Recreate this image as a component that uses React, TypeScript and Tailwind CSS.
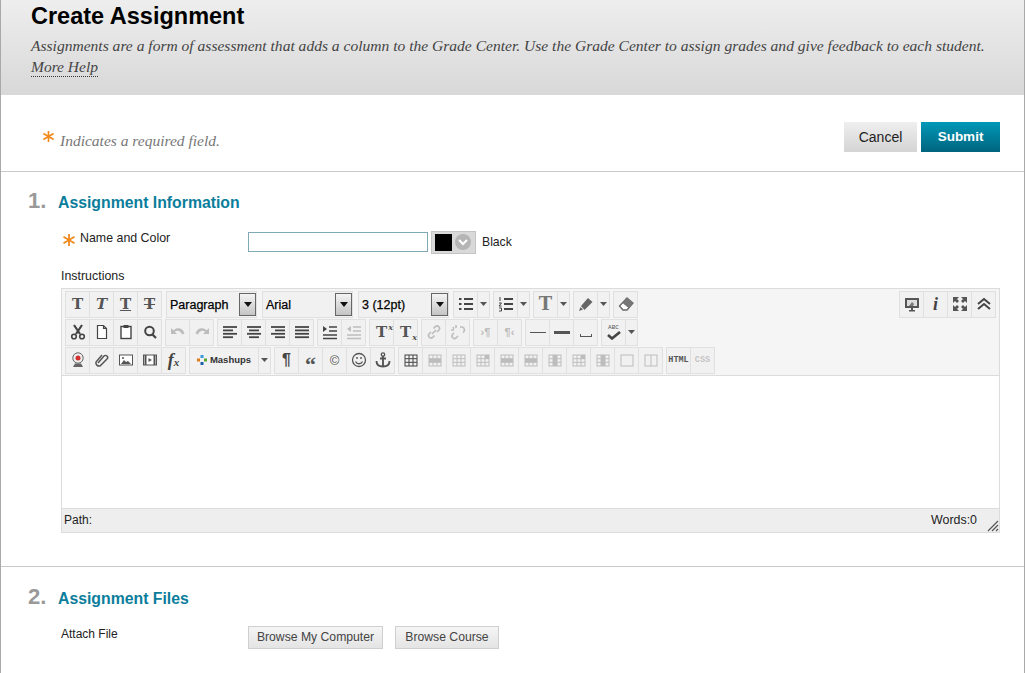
import React from 'react';

const ON = '#444';
const OFF = '#bdbdbd';

const Svg = ({ children, w = 16, h = 16 }: { children: React.ReactNode; w?: number; h?: number }) => (
  <svg width={w} height={h} viewBox={`0 0 ${w} ${h}`} fill="none">
    {children}
  </svg>
);

const Cell = ({ children, w = 'w-6' }: { children?: React.ReactNode; w?: string }) => (
  <div className={`${w} h-[25px] flex items-center justify-center shrink-0 border-r border-[#e0e0e0]`}>{children}</div>
);

const Group = ({ children }: { children: React.ReactNode }) => (
  <div className="flex border-y border-l border-[#e0e0e0] bg-[#f1f1f1] shrink-0 box-content h-[25px] -my-px">{children}</div>
);

const Caret = () => (
  <Cell w="w-3">
    <svg width="7" height="4" viewBox="0 0 7 4">
      <path d="M0 0h7L3.5 4z" fill="#555" />
    </svg>
  </Cell>
);

const Glyph = ({
  t,
  color = '#555',
  italic,
  under,
  strike,
  sup,
  sub,
}: {
  t: string;
  color?: string;
  italic?: boolean;
  under?: boolean;
  strike?: boolean;
  sup?: string;
  sub?: string;
}) => (
  <span
    className={`relative font-['DejaVu_Serif',serif] font-bold text-[15px] leading-none ${italic ? 'italic' : ''} ${under ? 'underline' : ''} ${strike ? 'line-through' : ''}`}
    style={{ color }}
  >
    {t}
    {sup && <span className="absolute -right-[6px] -top-[2px] text-[8px] italic">{sup}</span>}
    {sub && <span className="absolute -right-[6px] -bottom-[1px] text-[8px] italic">{sub}</span>}
  </span>
);

const Lines = ({ kind, color = ON }: { kind: 'l' | 'c' | 'r' | 'j'; color?: string }) => {
  const rows = [0, 1, 2, 3];
  const pos = (i: number) => {
    const short = i % 2 === 1;
    if (kind === 'j' || !short) return [1, 15];
    if (kind === 'l') return [1, 11];
    if (kind === 'c') return [3, 13];
    return [5, 15];
  };
  return (
    <Svg>
      {rows.map((i) => (
        <path key={i} d={`M${pos(i)[0]} ${3 + i * 3.4}H${pos(i)[1]}`} stroke={color} strokeWidth="1.8" />
      ))}
    </Svg>
  );
};

const Indent = ({ color, out }: { color: string; out?: boolean }) => (
  <Svg>
    <path d={out ? 'M5 2L1 5l4 3z' : 'M1 2l4 3-4 3z'} fill={color} />
    <path d="M7 3h8M7 7h8M1 11h14M1 14.5h14" stroke={color} strokeWidth="1.6" />
  </Svg>
);

const Table = ({ color = OFF, mark }: { color?: string; mark?: 'row' | 'col' | 'cell' | 'none' }) => (
  <Svg w={14} h={14}>
    <rect x="1" y="2" width="12" height="11" stroke={color} />
    <path d="M5 2v11M9 2v11M1 5.7h12M1 9.3h12" stroke={color} />
    {mark === 'row' && <rect x="1" y="5.7" width="12" height="3.6" fill={color} />}
    {mark === 'col' && <rect x="5" y="2" width="4" height="11" fill={color} />}
    {mark === 'cell' && <rect x="9" y="2" width="4" height="3.7" fill={color} />}
  </Svg>
);

const Select = ({ label, w }: { label: string; w: string }) => (
  <div className={`${w} h-[25px] -my-px flex items-center justify-between border border-[#e0e0e0] bg-[#f1f1f1] shrink-0 box-content`}>
    <span className="pl-[3px] pt-[3px] text-[12.5px] text-black [-webkit-text-stroke:0.25px_#000]">{label}</span>
    <div className="w-[17px] h-[23px] border border-[#666] bg-gradient-to-b from-[#f4f4f4] to-[#c4c4c4] flex items-center justify-center">
      <svg width="8" height="5" viewBox="0 0 8 5">
        <path d="M0 0h8L4 5z" fill="#111" />
      </svg>
    </div>
  </div>
);

const Star = ({ size = 14 }: { size?: number }) => (
  <svg width={size} height={size} viewBox="0 0 14 14" className="shrink-0">
    <path d="M7 1v12M1.5 3.8l11 6.4M12.5 3.8l-11 6.4" stroke="#f08a1d" strokeWidth="1.8" />
  </svg>
);

const Row = ({ children }: { children: React.ReactNode }) => <div className="flex gap-[3px] h-[25px] items-center">{children}</div>;

const Toolbar = () => (
  <div className="bg-[#f5f5f5] border-b border-[#dcdcdc] h-[87px] pl-[3px] pr-[3px] pt-[3px] flex flex-col gap-[3px]">
    <div className="flex justify-between">
      <Row>
        <Group>
          <Cell><Glyph t="T" /></Cell>
          <Cell><Glyph t="T" italic /></Cell>
          <Cell><Glyph t="T" under /></Cell>
          <Cell><Glyph t="T" strike /></Cell>
        </Group>
        <Select label="Paragraph" w="w-[89px] ml-px" />
        <Select label="Arial" w="w-[89px] ml-[2px]" />
        <Select label="3 (12pt)" w="w-[89px] ml-[2px] mr-px" />
        <Group>
          <Cell>
            <Svg><path d="M1 3h2.500M1 8h2.500M1 13h2.500M6 3h9M6 8h9M6 13h9" stroke={ON} strokeWidth="1.800" /></Svg>
          </Cell>
          <Caret />
        </Group>
        <Group>
          <Cell>
            <Svg><path d="M6 3h9M6 8h9M6 13h9" stroke={ON} strokeWidth="1.800" /><path d="M2 1v4M1 7h2.500L1 10h2.500M1 12h2.500v3H1" stroke={ON} /></Svg>
          </Cell>
          <Caret />
        </Group>
        <Group>
          <Cell><span className="font-['DejaVu_Serif',serif] font-bold text-[18px] leading-none text-[#777]">T</span></Cell>
          <Caret />
        </Group>
        <Group>
          <Cell>
            <Svg><path d="M1 15l1.500-4 2.500 2.500z" fill="#666" /><path d="M3 10l7-8 4.500 4-8 8z" fill="#666" /></Svg>
          </Cell>
          <Caret />
        </Group>
        <Group>
          <Cell>
            <Svg><path d="M9 2l6 5-6 7H5L1.500 10z" stroke="#666" strokeWidth="1.300" fill="#fff" /><path d="M9 2l6 5-4.500 5L4.500 7z" fill="#777" /></Svg>
          </Cell>
        </Group>
      </Row>
      <Row>
        <Group>
          <Cell>
            <Svg><rect x="1" y="2" width="14" height="10" fill="#555" /><path d="M3 4h10v6H3z" fill="#ddd" /><path d="M5 10l3-4 2 2-1 2z" fill="#777" /><path d="M5 14h6v1.500H5zM7 12h2v2H7z" fill="#555" /></Svg>
          </Cell>
          <Cell><span className="font-['Liberation_Serif',serif] italic font-bold text-[18px] leading-none text-[#444]">i</span></Cell>
          <Cell>
            <Svg><path d="M1 1h6L5 3l2 2-2 2-2-2-2 2zM15 1H9l2 2-2 2 2 2 2-2 2 2zM1 15h6l-2-2 2-2-2-2-2 2-2-2zM15 15H9l2-2-2-2 2-2 2 2 2-2z" fill="#555" /></Svg>
          </Cell>
          <Cell>
            <Svg><path d="M2 8l6-5 6 5M2 13l6-5 6 5" stroke="#444" strokeWidth="2" /></Svg>
          </Cell>
        </Group>
      </Row>
    </div>
    <Row>
      <Group>
        <Cell>
          <Svg><path d="M4 1l6 9M12 1l-6 9" stroke="#444" strokeWidth="2.200" /><circle cx="4" cy="12.500" r="2.300" stroke="#444" strokeWidth="1.600" /><circle cx="12" cy="12.500" r="2.300" stroke="#444" strokeWidth="1.600" /></Svg>
        </Cell>
        <Cell>
          <Svg><path d="M3.500 1.500h6l3 3v10h-9zM9.500 1.500v3h3" stroke="#444" strokeWidth="1.200" fill="#fff" /></Svg>
        </Cell>
        <Cell>
          <Svg><rect x="3" y="2.500" width="10" height="12" stroke="#444" strokeWidth="1.400" fill="#fff" /><rect x="5.500" y="1" width="5" height="3" fill="#444" /></Svg>
        </Cell>
        <Cell>
          <Svg><circle cx="7.500" cy="7" r="4.300" stroke="#444" strokeWidth="2" /><path d="M10.500 10.500l3.500 3.500" stroke="#444" strokeWidth="2.200" /></Svg>
        </Cell>
      </Group>
      <Group>
        <Cell><Svg><path d="M1 4v6h6L4.800 7.800C7 6 10.500 6.500 12 10.500l2.500-1C13 4 7.500 2.500 3.300 6.200z" fill={OFF} /></Svg></Cell>
        <Cell><Svg><path d="M15 4v6H9l2.200-2.200C9 6 5.500 6.500 4 10.500l-2.500-1C3 4 8.500 2.500 12.700 6.200z" fill={OFF} /></Svg></Cell>
      </Group>
      <Group>
        <Cell><Lines kind="l" /></Cell>
        <Cell><Lines kind="c" /></Cell>
        <Cell><Lines kind="r" /></Cell>
        <Cell><Lines kind="j" /></Cell>
      </Group>
      <Group>
        <Cell><Indent color={ON} /></Cell>
        <Cell><Indent color={OFF} out /></Cell>
      </Group>
      <Group>
        <Cell><Glyph t="T" sup="x" /></Cell>
        <Cell><Glyph t="T" sub="x" /></Cell>
      </Group>
      <Group>
        <Cell><Svg><path d="M6 10l4-4M5 8l-2 2a2.500 2.500 0 0 0 3.500 3.500l2-2M11 8l2-2A2.500 2.500 0 0 0 9.500 2.500l-2 2" stroke={OFF} strokeWidth="1.700" /></Svg></Cell>
        <Cell><Svg><path d="M4 9l-1.500 1.500a2.500 2.500 0 0 0 3.500 3.500L8 12M10 3h2a3 3 0 0 1 1 5.500M3 3l1 2M6 1v3M1 6h3" stroke={OFF} strokeWidth="1.600" /></Svg></Cell>
      </Group>
      <Group>
        <Cell><span className="text-[11px] font-bold text-[#bbb] font-['Liberation_Sans',sans-serif]">›¶</span></Cell>
        <Cell><span className="text-[11px] font-bold text-[#bbb] font-['Liberation_Sans',sans-serif]">¶‹</span></Cell>
      </Group>
      <Group>
        <Cell><div className="w-[16px] h-px bg-[#555]" /></Cell>
        <Cell><div className="w-[16px] h-[3px] bg-[#555]" /></Cell>
        <Cell><div className="w-[12px] h-[3px] mt-[7px] border-x border-b border-[#555]" /></Cell>
      </Group>
      <Group>
        <Cell>
          <div className="flex flex-col items-center leading-none">
            <span className="text-[6px] text-[#555] font-['Liberation_Mono',monospace] leading-[6px]">ABC</span>
            <svg width="14" height="9" viewBox="0 0 14 9"><path d="M1 4l4 3.500L13 1" stroke="#444" strokeWidth="2.600" fill="none" /></svg>
          </div>
        </Cell>
        <Caret />
      </Group>
    </Row>
    <Row>
      <Group>
        <Cell>
          <Svg><circle cx="8" cy="6" r="5.200" stroke="#666" fill="#eee" /><circle cx="8" cy="6" r="2.500" fill="#d43030" /><path d="M3 15h10l-2-3.500H5z" fill="#666" /></Svg>
        </Cell>
        <Cell>
          <Svg><path d="M4 11l6-7a2 2 0 0 1 3 3l-7 7a3.300 3.300 0 0 1-4-4l6-7" stroke="#555" strokeWidth="1.500" /></Svg>
        </Cell>
        <Cell>
          <Svg><rect x="1.500" y="3" width="13" height="10" stroke="#555" fill="#fff" /><path d="M3 12l3-4 2 2 2-1 3 3z" fill="#555" /><circle cx="5" cy="6" r="1" fill="#555" /></Svg>
        </Cell>
        <Cell>
          <Svg><rect x="1.500" y="3" width="13" height="10" stroke="#555" fill="#fff" /><path d="M3.500 3v10M12.500 3v10" stroke="#555" strokeWidth="2" /><path d="M6.500 6l3.500 2-3.500 2z" fill="#555" /></Svg>
        </Cell>
        <Cell>
          <span className="font-['Liberation_Serif',serif] italic font-bold text-[18px] leading-none text-[#444]">f<span className="text-[11px]">x</span></span>
        </Cell>
      </Group>
      <Group>
        <Cell w="w-[69px]">
          <span className="flex items-center gap-[3px] text-[9.5px] font-bold text-[#333] font-['Liberation_Sans',sans-serif]">
            <svg width="10" height="10" viewBox="0 0 10 10">
              <rect x="0" y="3.500" width="3" height="3" fill="#e07a1a" />
              <rect x="3.500" y="0" width="3" height="3" fill="#3b9ad9" />
              <rect x="7" y="3.500" width="3" height="3" fill="#5aa632" />
              <rect x="3.500" y="7" width="3" height="3" fill="#1b5fa8" />
            </svg>
            Mashups
          </span>
        </Cell>
        <Caret />
      </Group>
      <Group>
        <Cell><span className="font-bold text-[16px] leading-none text-[#444]">¶</span></Cell>
        <Cell><span className="font-['Liberation_Serif',serif] font-bold text-[22px] leading-none text-[#555] pt-[9px]">“</span></Cell>
        <Cell><span className="text-[13px] leading-none text-[#555]">©</span></Cell>
        <Cell>
          <Svg><circle cx="8" cy="8" r="6.500" stroke="#555" strokeWidth="1.300" /><path d="M4.500 9.500c1.500 3 5.500 3 7 0" stroke="#555" strokeWidth="1.300" /><path d="M6 5v2M10 5v2" stroke="#555" strokeWidth="1.400" /></Svg>
        </Cell>
        <Cell>
          <Svg><circle cx="8" cy="2.500" r="1.700" stroke="#555" strokeWidth="1.300" /><path d="M8 4v11M5 6.500h6M1.500 9c0 4 3 5.500 6.500 5.500s6.500-1.500 6.500-5.500" stroke="#555" strokeWidth="1.900" /></Svg>
        </Cell>
      </Group>
      <Group>
        <Cell><Table color="#444" /></Cell>
        <Cell><Table mark="row" /></Cell>
        <Cell><Table /></Cell>
        <Cell><Table mark="cell" /></Cell>
        <Cell><Table mark="row" /></Cell>
        <Cell><Table mark="row" /></Cell>
        <Cell><Table mark="col" /></Cell>
        <Cell><Table mark="cell" /></Cell>
        <Cell><Table mark="col" /></Cell>
        <Cell>
          <Svg w={14} h={14}><rect x="1" y="2" width="12" height="11" stroke={OFF} /></Svg>
        </Cell>
        <Cell>
          <Svg w={14} h={14}><rect x="1" y="2" width="12" height="11" stroke={OFF} /><path d="M7 2v11" stroke={OFF} /></Svg>
        </Cell>
      </Group>
      <Group>
        <Cell><span className="font-['Liberation_Mono',monospace] font-bold text-[8.500px] text-[#555]">HTML</span></Cell>
        <Cell><span className="font-['Liberation_Mono',monospace] font-bold text-[8.500px] text-[#c4c4c4]">CSS</span></Cell>
      </Group>
    </Row>
  </div>
);

const App = () => (
  <div className="w-[1026px] h-[673px] overflow-hidden bg-white font-['Liberation_Sans',Arial,sans-serif] pr-px">
    <div className="h-full border-x border-[#a9a9a9]">
      <div className="h-[95px] bg-gradient-to-b from-[#eeeeee] to-[#d8d8d8] pl-[30px] pt-[2px]">
        <h1 className="text-[23.5px] leading-[28px] font-bold text-black">Create Assignment</h1>
        <p className="mt-[6px] font-['Liberation_Serif',serif] italic text-[15.55px] leading-[19px] text-[#444]">
          Assignments are a form of assessment that adds a column to the Grade Center. Use the Grade Center to assign grades and give feedback to each student.
        </p>
        <a className="-mt-[2px] font-['Liberation_Serif',serif] italic text-[15.5px] leading-[19px] text-[#444] border-b border-dotted border-[#333] inline-block">More Help</a>
      </div>

      <div className="h-[77px] border-b border-[#c9c9c9] flex justify-between pl-[41px] pr-[24px] pt-[27px]">
        <div className="flex items-start gap-[5px] pt-[8px]">
          <Star size={13} />
          <span className="font-['Liberation_Serif',serif] italic text-[15.5px] leading-[19px] text-[#777] mt-[1px]">Indicates a required field.</span>
        </div>
        <div className="flex gap-[4px]">
          <button className="w-[73px] h-[30px] bg-gradient-to-b from-[#efefef] to-[#d4d4d4] text-[14px] text-[#222]">Cancel</button>
          <button className="w-[79px] h-[30px] bg-gradient-to-b from-[#0099b8] to-[#00647e] text-[13.5px] font-bold text-white">Submit</button>
        </div>
      </div>

      <div className="h-[395px] border-b border-[#c9c9c9] pl-[27px] pt-[16px]">
        <div className="flex items-baseline">
          <span className="w-[30px] text-[22px] leading-[26px] font-bold text-[#999]">1.</span>
          <h2 className="text-[15.8px] font-bold text-[#0b7d9c]">Assignment Information</h2>
        </div>
        <div className="flex mt-[16px] ml-[34px]">
          <div className="w-[186px] flex items-start gap-[4px] pt-[2px]">
            <Star />
            <span className="-mt-[2px] text-[12.4px] leading-[14px] text-[#222]">Name and Color</span>
          </div>
          <input className="w-[180px] h-[20px] mt-px border border-[#7fa9b5] bg-white" />
          <div className="ml-[3px] w-[45px] h-[23px] bg-[#d9d9d9] border border-[#c4c4c4] flex items-center gap-[3px] pl-[3px]">
            <div className="w-[17px] h-[17px] bg-black" />
            <div className="w-[16px] h-[16px] rounded-full bg-[#b5b5b5] flex items-center justify-center">
              <svg width="10" height="7" viewBox="0 0 10 7"><path d="M1 1l4 4 4-4" stroke="#fff" strokeWidth="2" fill="none" /></svg>
            </div>
          </div>
          <span className="ml-[6px] mt-[4px] text-[12.2px] leading-[14px] text-[#222]">Black</span>
        </div>
        <div className="ml-[33px] mt-[15px] text-[12.4px] leading-[14px] text-[#222]">Instructions</div>
        <div className="ml-[33px] mt-[5px] w-[939px] h-[245px] border border-[#dcdcdc] flex flex-col">
          <Toolbar />
          <div className="h-[132px] bg-white" />
          <div className="flex-1 bg-[#eeeeee] border-t border-[#dcdcdc] flex items-center justify-between pl-[2px] pr-[22px] relative">
            <span className="text-[12px] text-[#222]">Path:</span>
            <span className="text-[12.4px] text-[#222]">Words:0</span>
            <svg width="12" height="12" viewBox="0 0 12 12" className="absolute right-0 bottom-0">
              <path d="M1 11L11 1M5 11l6-6M9 11l2-2" stroke="#555" strokeWidth="1.200" />
            </svg>
          </div>
        </div>
      </div>

      <div className="pl-[27px] pt-[17px]">
        <div className="flex items-baseline">
          <span className="w-[30px] text-[22px] leading-[26px] font-bold text-[#999]">2.</span>
          <h2 className="text-[15.8px] font-bold text-[#0b7d9c]">Assignment Files</h2>
        </div>
        <div className="flex mt-[15px] ml-[33px]">
          <span className="w-[187px] pt-px text-[12px] leading-[14px] text-[#222]">Attach File</span>
          <button className="w-[135px] h-[23px] border border-[#cfcfcf] bg-gradient-to-b from-[#f5f5f5] to-[#e4e4e4] text-[12.2px] text-[#444]">Browse My Computer</button>
          <button className="ml-[12px] w-[104px] h-[23px] border border-[#cfcfcf] bg-gradient-to-b from-[#f5f5f5] to-[#e4e4e4] text-[12.2px] text-[#444]">Browse Course</button>
        </div>
      </div>
    </div>
  </div>
);

export default App;
